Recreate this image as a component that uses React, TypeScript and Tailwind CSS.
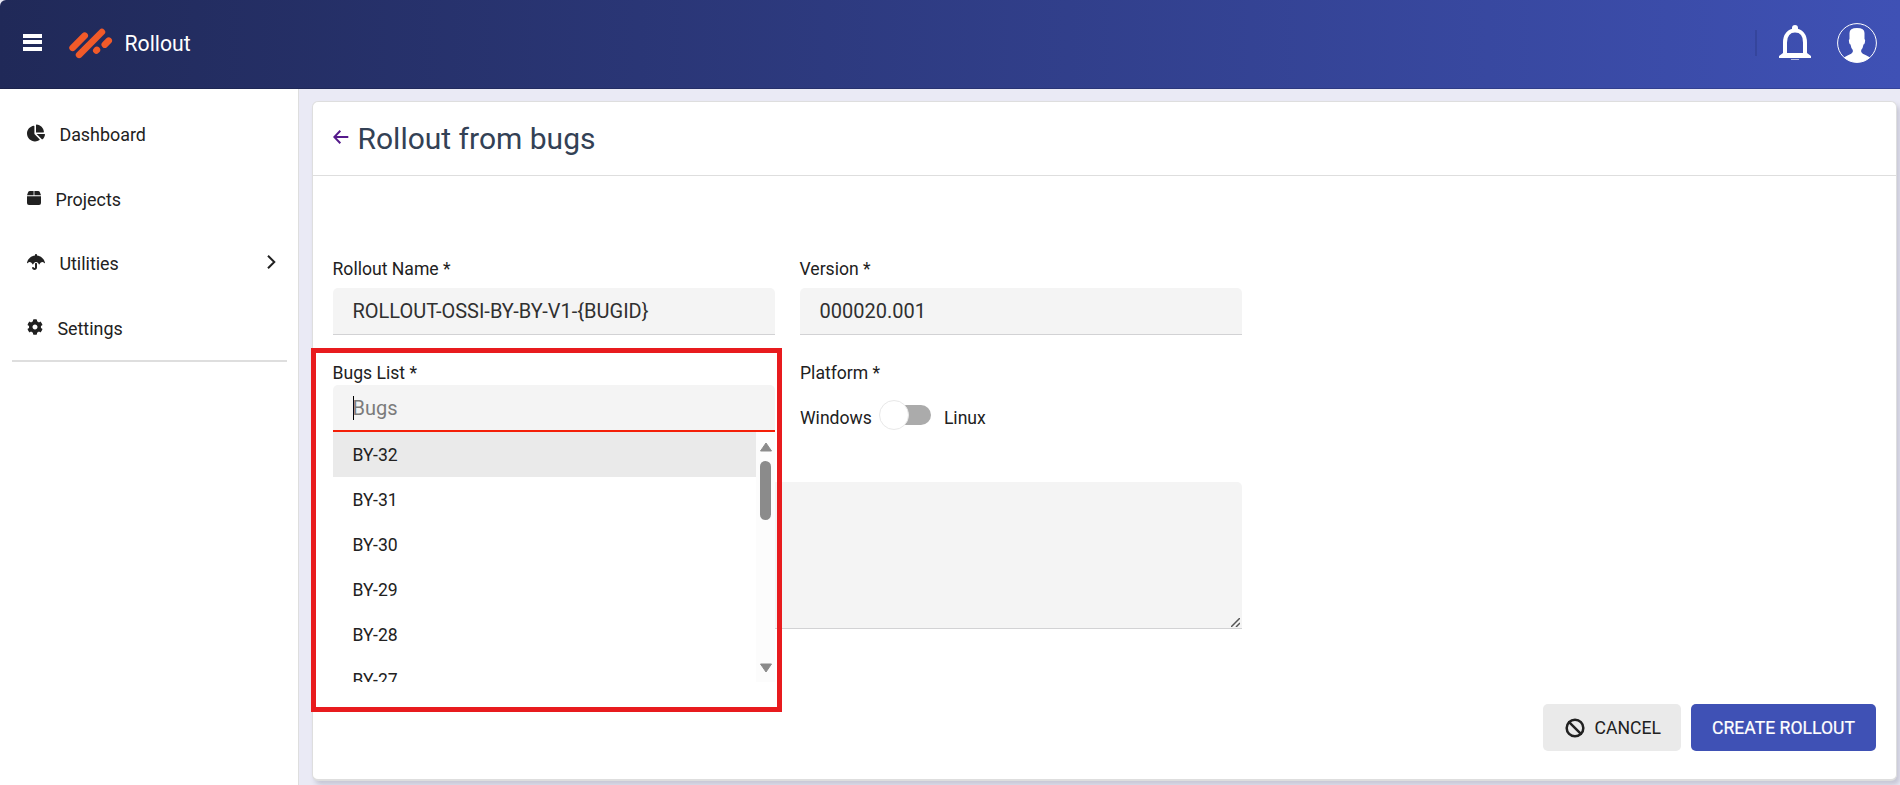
import type { ReactNode } from "react";
import { FaChartPie, FaCog, FaUmbrella } from "react-icons/fa";
import { Ban } from "lucide-react";

const bugs = ["BY-32", "BY-31", "BY-30", "BY-29", "BY-28", "BY-27"];

function BoxIcon() {
  return (
    <svg viewBox="0 0 14 14" className="size-[14px]" fill="currentColor">
      <path d="M0 4.2 1 1.4Q1.5 0 3 0H6.4V4.2Z M7.6 0H11Q12.5 0 13 1.4L14 4.2H7.6Z" />
      <rect x="6.4" width="1.2" height="4.2" opacity=".55" />
      <path d="M0 5.2H14V12Q14 14 12 14H2Q0 14 0 12Z" />
    </svg>
  );
}

function Logo() {
  return (
    <svg viewBox="0 0 44 32" className="h-8 w-11" fill="none" stroke="#f15a29" strokeWidth="6.600" strokeLinecap="round">
      <path d="M3.6 20.800 15.700 8.700M10.100 27.800 32.900 5M35.800 17.600 39.700 13.700M27.300 23.500 27.900 22.900" />
    </svg>
  );
}

function Bell() {
  return (
    <svg viewBox="0 0 32 36" className="h-9 w-8" fill="none">
      <path d="M6 29V17.5C6 10 10 5.6 16 5.6S26 10 26 17.5V29" stroke="#fff" strokeWidth="4" />
      <path d="M13 6V3Q13 0 16 0T19 3V6ZM4 28H28L32 31V33H0V31Z" fill="#fff" />
      <path d="M12 34.5H20" stroke="#fff" strokeOpacity=".6" />
    </svg>
  );
}

function Avatar() {
  return (
    <svg viewBox="0 0 40 40" className="size-10">
      <defs>
        <clipPath id="face">
          <circle cx="20" cy="20" r="19.5" />
        </clipPath>
      </defs>
      <circle cx="20" cy="20" r="19.4" fill="none" stroke="#fff" strokeWidth="1" />
      <path
        clipPath="url(#face)"
        fill="#fff"
        d="M12.5 10Q12.5 5 20 5T27.5 10V16Q28.5 16.5 28 19T26.5 21.5Q26 25 24.2 27V29Q25 31 29 32.3 33 34 34 35.5V40H6V35.5Q7 34 11 32.3 15 31 15.8 29V27Q14 25 13.500 21.500 12.500 21.500 12 19T12.500 16Z"
      />
    </svg>
  );
}

function NavItem({ icon, label, arrow }: { icon: ReactNode; label: string; arrow?: boolean }) {
  return (
    <li className="flex h-[64.6px] items-center pr-[22px] pl-[27px]">
      <span className="-mt-[5px]">{icon}</span>
      <span className="ml-[14.400px] text-[17.900px]">{label}</span>
      {arrow && (
        <svg viewBox="0 0 9 14" className="-mt-[5px] ml-auto h-[14px] w-[9px]" fill="none" stroke="currentColor" strokeWidth="2">
          <path d="M1 .7 7.300 7 1 13.300" />
        </svg>
      )}
    </li>
  );
}

function Field({ label, value }: { label: string; value: string }) {
  return (
    <div>
      <div className="-ml-[.5px] h-[31px] leading-6">{label}</div>
      <div className="flex h-[47px] items-center rounded-t-[5px] border-b border-[#d2d2d4] bg-[#f4f4f4] px-[19.500px] text-[20px] text-[#303030]">
        {value}
      </div>
    </div>
  );
}

function BugSelect() {
  return (
    <div className="relative">
      <div className="-ml-[.5px] h-6 leading-6">Bugs List *</div>
      <div className="flex h-[47px] items-center rounded-t-[5px] border-b-2 border-[#f41f08] bg-[#f4f4f4] px-5 pt-px text-[20px] text-[#7b7b7b]">
        <span className="-mr-[1.500px] h-6 w-px bg-black" />
        Bugs
      </div>
      <div className="absolute inset-x-0 top-[71px] z-10 flex h-[250px] overflow-hidden bg-white">
        <ul className="grow text-[#212121]">
          {bugs.map((bug, i) => (
            <li
              key={bug}
              className={
                i === 0
                  ? "h-[45px] bg-[#eaeaea] px-[19.500px] pt-px leading-[45px]"
                  : "h-[45px] px-[19.500px] pt-px leading-[45px]"
              }
            >
              {bug}
            </li>
          ))}
        </ul>
        <div className="flex w-[19px] flex-col items-center bg-[#fcfcfc] pt-[10px] pb-[9px]">
          <svg viewBox="0 0 12 10" className="h-[10px] w-3 shrink-0" fill="#8b8b8b" stroke="#8b8b8b" strokeLinejoin="round">
            <path d="M6 1 11.500 9H.5Z" />
          </svg>
          <div className="mt-[9px] h-[59px] w-[11px] shrink-0 rounded-full bg-[#8b8b8b]" />
          <svg viewBox="0 0 12 10" className="mt-auto h-[10px] w-3 shrink-0" fill="#8b8b8b" stroke="#8b8b8b" strokeLinejoin="round">
            <path d="M6 9 11.500 1H.5Z" />
          </svg>
        </div>
      </div>
      <div className="absolute -top-[13px] -left-[22px] z-20 h-[364px] w-[470.500px] border-[5px] border-[#e81b1e]" />
    </div>
  );
}

export default function App() {
  return (
    <div className="flex h-[785px] w-[1900px] flex-col overflow-hidden bg-[#eaeaf5] font-['Roboto',sans-serif] text-[17.600px] text-[#212121]">
      <header className="flex h-[89px] shrink-0 items-center rounded-tl-md border-b border-black/15 bg-linear-to-r from-[#202958] to-[#3f51b5] pr-[23px] pl-[23px] text-white">
        <div className="mt-[-4px] flex h-[17px] w-[19px] flex-col justify-between">
          <span className="h-1 bg-white" />
          <span className="h-1 bg-white" />
          <span className="h-1 bg-white" />
        </div>
        <div className="-mt-[3px] ml-[27px]">
          <Logo />
        </div>
        <span className="-mt-px ml-[11.500px] text-[21.200px] font-normal">Rollout</span>
        <div className="-mt-[2px] ml-auto flex items-center">
          <span className="h-[26px] w-[2px] bg-[#35459c]" />
          <span className="ml-[22px]">
            <Bell />
          </span>
          <span className="ml-[26px]">
            <Avatar />
          </span>
        </div>
      </header>

      <div className="flex min-h-0 grow">
        <aside className="w-[299px] shrink-0 border-r border-[#dedede] bg-white pt-[14.400px]">
          <ul className="h-[256.600px]">
            <NavItem icon={<FaChartPie className="size-[18px]" />} label="Dashboard" />
            <NavItem icon={<BoxIcon />} label="Projects" />
            <NavItem icon={<FaUmbrella className="size-[18px]" />} label="Utilities" arrow />
            <NavItem icon={<FaCog className="size-4" />} label="Settings" />
          </ul>
          <hr className="mr-[11px] ml-3 border-t-2 border-[#dedede]" />
        </aside>

        <main className="grow pt-3 pr-[3px] pl-[13px]">
          <section className="flex h-[680px] flex-col rounded-md border border-b-2 border-[#dedede] bg-white shadow-[3px_4px_5px_0_rgba(60,60,90,0.2)]">
            <div className="flex h-[74px] shrink-0 items-center border-b border-[#dedede] pl-5">
              <svg viewBox="0 0 16 14" className="-mt-1 -ml-[.5px] h-[14px] w-4" fill="none" stroke="#551a8b" strokeWidth="2">
                <path d="M7.300 .8 1.300 7 7.300 13.200M1.300 7H15.300" />
              </svg>
              <h1 className="ml-[9px] text-[30px] text-[#334155]">Rollout from bugs</h1>
            </div>

            <form className="flex grow flex-col pt-[81px] pr-5 pl-5">
              <div className="grid grid-cols-[442px_442px] gap-x-[25px] gap-y-[26px]">
                <Field label="Rollout Name *" value="ROLLOUT-OSSI-BY-BY-V1-{BUGID}" />
                <Field label="Version *" value="000020.001" />
                <BugSelect />
                <div>
                  <div className="h-6 leading-6">Platform *</div>
                  <div className="mt-[15px] flex h-[30px] items-center">
                    <span className="pt-[6px]">Windows</span>
                    <span className="ml-[7px] flex h-5 w-[52px] items-center rounded-full bg-[linear-gradient(to_right,transparent_50%,#ababab_50%)]">
                      <span className="size-[30px] shrink-0 rounded-full border border-[#e8e8e8] bg-white" />
                    </span>
                    <span className="ml-[13px] pt-[6px]">Linux</span>
                  </div>
                </div>
              </div>
              <div className="mt-[50px] flex h-[147px] w-[909px] shrink-0 items-end justify-end rounded-t-[5px] border-b border-[#d2d2d4] bg-[#f4f4f4] pr-[2px] pb-px">
                <svg viewBox="0 0 9 9" className="size-[9px]" stroke="#555" strokeWidth="1.500">
                  <path d="M0 9 9 0M5 9 9 5" />
                </svg>
              </div>
              <div className="mt-[75px] flex justify-end gap-[10px]">
                <button type="button" className="flex h-[47px] w-[138px] items-center rounded-[5px] bg-[#eaeaea] pl-[22px]">
                  <Ban className="mt-px size-5" strokeWidth={3} />
                  <span className="ml-[9.500px] pt-[2px]">CANCEL</span>
                </button>
                <button type="button" className="h-[47px] w-[185px] rounded-[5px] bg-[#3f51b5] pt-[2px] text-white [-webkit-text-stroke:0.2px_white]">
                  CREATE ROLLOUT
                </button>
              </div>
            </form>
          </section>
        </main>
      </div>
    </div>
  );
}
